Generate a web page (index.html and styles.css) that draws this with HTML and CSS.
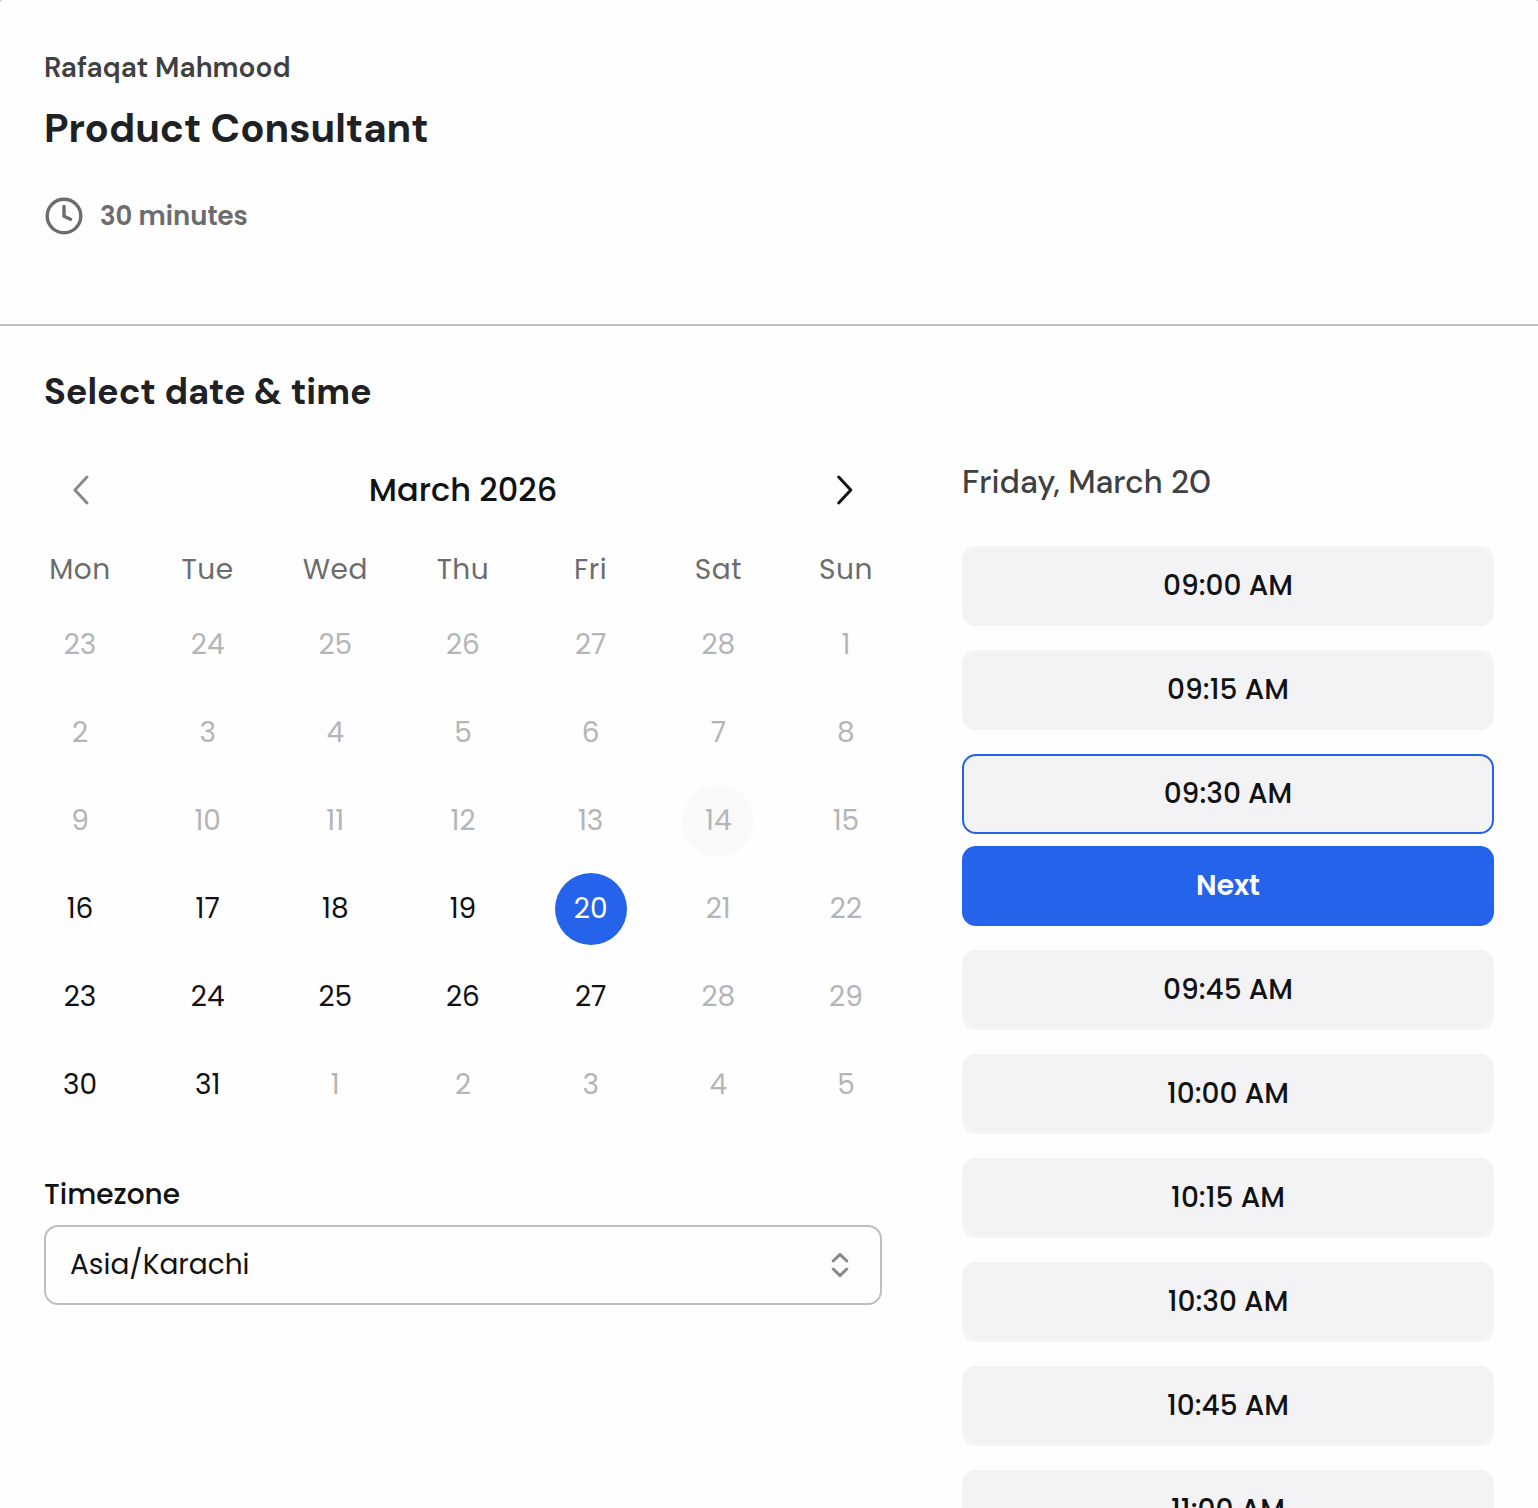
FILE: index.html
```html
<!DOCTYPE html>
<html lang="en">
<head>
    <meta charset="utf-8">
    <meta name="viewport" content="width=device-width, initial-scale=1">
    <title>Product Consultant</title>
    <link rel="stylesheet" href="styles.css">
</head>
<body>
<div class="card">
    <header class="event">
        <div class="host">Rafaqat Mahmood</div>
        <h1>Product Consultant</h1>
        <div class="duration">
            <svg width="40" height="40" viewBox="0 0 40 40" fill="none" stroke="currentColor" stroke-width="3.4" stroke-linecap="round" stroke-linejoin="round">
                <circle cx="20" cy="20" r="16.8"/>
                <path d="M20 10.5v9.8l6.5 3"/>
            </svg>
            <span>30 minutes</span>
        </div>
    </header>

    <main class="booking">
        <h2>Select date &amp; time</h2>
        <div class="columns">
            <section class="left">
                <div class="month">
                    <button type="button" class="nav prev" aria-label="Previous month">
                        <svg width="40" height="40" viewBox="0 0 40 40"><path d="M26 7L13.9 20L26 33"/></svg>
                    </button>
                    <span>March 2026</span>
                    <button type="button" class="nav" aria-label="Next month">
                        <svg width="40" height="40" viewBox="0 0 40 40"><path d="M13.7 7L25.8 20L13.7 33"/></svg>
                    </button>
                </div>

                <div class="row weekdays">
                    <span>Mon</span><span>Tue</span><span>Wed</span><span>Thu</span><span>Fri</span><span>Sat</span><span>Sun</span>
                </div>
                <div class="days">
                    <div class="row">
                        <span>23</span><span>24</span><span>25</span><span>26</span><span>27</span><span>28</span><span>1</span>
                    </div>
                    <div class="row">
                        <span>2</span><span>3</span><span>4</span><span>5</span><span>6</span><span>7</span><span>8</span>
                    </div>
                    <div class="row">
                        <span>9</span><span>10</span><span>11</span><span>12</span><span>13</span><span class="today">14</span><span>15</span>
                    </div>
                    <div class="row">
                        <span class="open">16</span><span class="open">17</span><span class="open">18</span><span class="open">19</span><span class="selected">20</span><span>21</span><span>22</span>
                    </div>
                    <div class="row">
                        <span class="open">23</span><span class="open">24</span><span class="open">25</span><span class="open">26</span><span class="open">27</span><span>28</span><span>29</span>
                    </div>
                    <div class="row">
                        <span class="open">30</span><span class="open">31</span><span>1</span><span>2</span><span>3</span><span>4</span><span>5</span>
                    </div>
                </div>

                <div class="label">Timezone</div>
                <div class="select">
                    <span>Asia/Karachi</span>
                    <svg width="40" height="40" viewBox="0 0 40 40"><path d="M13.2 16L20 9.4L26.8 16M13.2 24L20 30.6L26.8 24"/></svg>
                </div>
            </section>

            <section class="slots">
                <div class="date">Friday, March 20</div>
                <button type="button" class="slot">09:00 AM</button>
                <button type="button" class="slot">09:15 AM</button>
                <button type="button" class="slot active">09:30 AM</button>
                <button type="button" class="slot next">Next</button>
                <button type="button" class="slot">09:45 AM</button>
                <button type="button" class="slot">10:00 AM</button>
                <button type="button" class="slot">10:15 AM</button>
                <button type="button" class="slot">10:30 AM</button>
                <button type="button" class="slot">10:45 AM</button>
                <button type="button" class="slot">11:00 AM</button>
            </section>
        </div>
    </main>
</div>
</body>
</html>
```

FILE: styles.css
```css
* {
    box-sizing: border-box;
}

body {
    margin: 0;
    height: 100vh;
    overflow: hidden;
    background-color: #bfbfbf;
    font-family: Poppins, Inter, sans-serif;
    color: #111214;
}

.card {
    height: 100vh;
    overflow: hidden;
    background-color: #fefefe;
    border-radius: 3px 3px 0 0;
}

.host, h1, h2, .date {
    font-family: "DM Sans", Inter, sans-serif;
    color: #202124;
}

.event {
    height: 326px;
    padding: 48px 44px 0;
    border-bottom: 2px solid #bfbfbf;
}

.host {
    font-size: 28px;
    font-weight: 600;
    line-height: 40px;
    color: #3f4042;
}

h1 {
    margin: 12px 0 0;
    font-size: 40px;
    font-weight: 700;
    line-height: 56px;
}

.duration {
    display: flex;
    align-items: center;
    gap: 16px;
    margin-top: 40px;
    height: 40px;
    font-size: 26px;
    font-weight: 600;
    color: #6b6c6e;
}

.booking {
    padding: 44px 44px 0;
}

h2 {
    margin: 0;
    font-size: 36px;
    font-weight: 700;
    line-height: 44px;
}

.columns {
    display: flex;
    justify-content: space-between;
    align-items: flex-start;
    margin-top: 36px;
}

.left {
    width: 838px;
}

.month {
    display: flex;
    justify-content: space-between;
    align-items: center;
    height: 80px;
    padding: 0 17px;
    font-size: 32px;
    font-weight: 500;
}

button {
    border: none;
    padding: 0;
    font-family: inherit;
    color: inherit;
    cursor: pointer;
}

.nav {
    width: 40px;
    height: 40px;
    background: none;
}

.prev {
    color: #88898a;
}

.nav svg, .select svg {
    display: block;
    fill: none;
    stroke: currentColor;
    stroke-width: 3;
    stroke-linecap: round;
    stroke-linejoin: round;
}

.row {
    display: flex;
    justify-content: space-between;
}

.row span {
    display: flex;
    align-items: center;
    justify-content: center;
    width: 72px;
    height: 72px;
    border-radius: 50%;
    font-size: 28px;
}

.weekdays {
    color: #6b6c6e;
}

.weekdays span {
    height: 79px;
    letter-spacing: 0.02em;
}

.days {
    display: flex;
    flex-direction: column;
    gap: 16px;
    color: #b4b5b6;
}

.open {
    color: #111214;
}

.row .today {
    background-color: #f9f9fa;
}

.row .selected {
    background-color: #2563eb;
    color: #fff;
}

.label {
    margin-top: 54px;
    font-size: 28px;
    font-weight: 500;
    line-height: 40px;
}

.select {
    display: flex;
    justify-content: space-between;
    align-items: center;
    height: 80px;
    margin-top: 10px;
    padding: 0 20px 0 24px;
    border: 2px solid #bfbfbf;
    border-radius: 14px;
    font-size: 28px;
}

.select svg {
    color: #88898a;
}

.slots {
    display: flex;
    flex-direction: column;
    width: 532px;
}

.date {
    margin-bottom: 44px;
    padding-top: 12px;
    font-size: 32px;
    font-weight: 500;
    line-height: 40px;
    color: #3f4042;
}

.slot {
    flex: none;
    height: 80px;
    margin-bottom: 24px;
    border: 2px solid transparent;
    border-radius: 14px;
    background-color: #f3f3f6;
    font-size: 28px;
    font-weight: 500;
}

.slot.active {
    margin-bottom: 12px;
    border-color: #2563eb;
}

.slot.next {
    background-color: #2563eb;
    color: #fff;
    font-weight: 600;
}
```
